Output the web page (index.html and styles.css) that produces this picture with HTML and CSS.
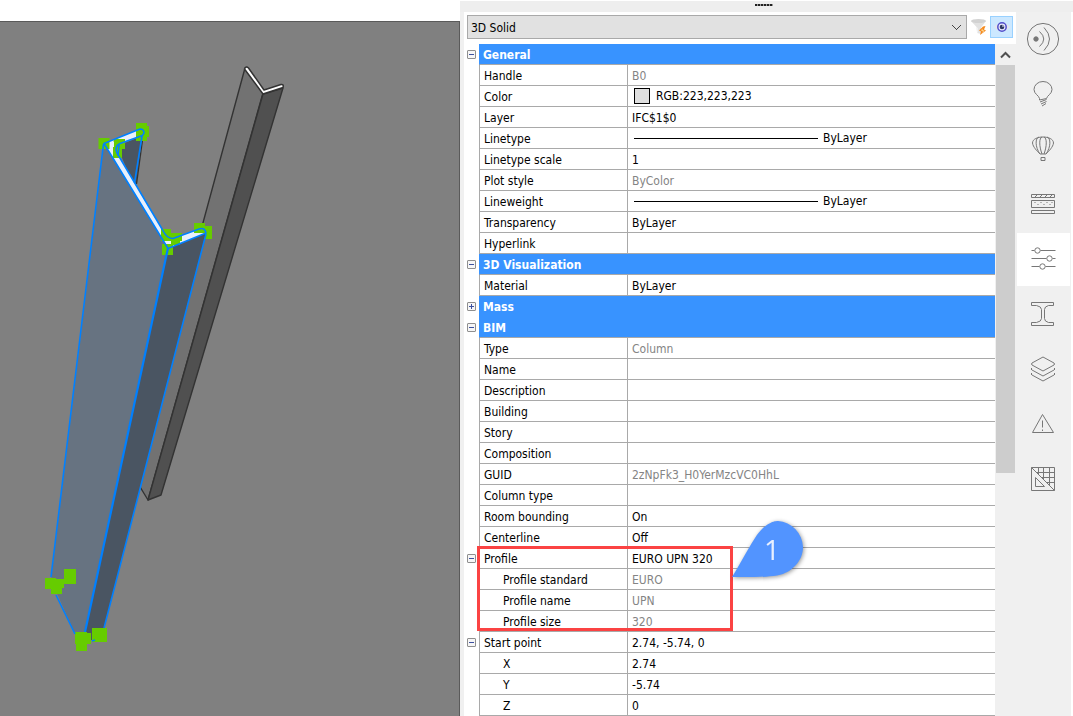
FILE: index.html
```html
<!DOCTYPE html>
<html lang="en">
<head>
<meta charset="utf-8">
<title>Properties - 3D Solid</title>
<link rel="stylesheet" href="styles.css">
</head>
<body>
<div class="app">
  <main class="viewport">
    <svg class="scene" viewBox="0 22 460 694" preserveAspectRatio="xMinYMin meet" role="img" aria-label="Model view with a selected column">
      <g stroke="#333" stroke-width="1.4" stroke-linejoin="round">
        <path d="M245 68L263 93L148 500L134 477Z" fill="#727272"/>
        <path d="M263 94L283 88L161 495L148 500Z" fill="#505050"/>
        <path d="M244.500 69Q246 65.500 248.500 68L264 90L281 84.500Q284 84 283 87.500L263 94Z" fill="#fff" stroke-width="1.500"/>
      </g>
      <path d="M117 146L142 136L136 186L133 184Z" fill="#4a5562"/>
      <path d="M142.500 140L136.500 184" stroke="#333" stroke-width="1.300"/>
      <path d="M104 144L168 248L83 640L75 634L51 580Z" fill="#677381"/>
      <path d="M168 248L206 233L101 640L83 640Z" fill="#4a5562"/>
      <path d="M104 143.500L140 129Q144 129 144 133Q143 135.500 141 136L120 143.500Q114 146 117 153L162 229Q167 239 173 238.500L199 229Q205 227 206 233L168 248.500Z" fill="#e8f0fc"/>
      <g fill="#66cc00">
        <path d="M98.500 138h11v11h-11zM136 123h11v3h2v11h-2v4h-11zM114 139h11v10h-3v9h-9v-12z"/>
        <path d="M161 229h10v4h11v8h-2v4h-9v-4h-10zM162 244h11v11h-11zM194 223h11v3h7v13h-7v-6h-11z"/>
        <path d="M45 578h11v1h8v9h-2v6h-11v-5h-6zM64 569h12v15h-12zM75 632h12v1h4v11h-4v7h-11v-7h-1zM92 628h15v14h-15z"/>
      </g>
      <path d="M110 142h4v5h-4zM164 241h6v2.500h-6z" fill="#e8f0fc"/>
      <g fill="none" stroke="#0080ff" stroke-width="1.600" stroke-linejoin="round">
        <path d="M104 143.500L140 129Q144 129 144 133Q143 135.500 141 136L120 143.500Q114 146 117 153L162 229Q167 239 173 238.500L199 229Q205 227 206 233L168 248.500Z"/>
        <path d="M103.500 144L51 577M56 595L75 634M206 234L104 628M142 136L134.500 183M119 145L118 156M92 641L95 640"/>
        <path d="M168 248L85 632" stroke-width="2.200"/>
      </g>
    </svg>
  </main>

  <aside class="dock">
    <div class="dock-title"><span class="grip"></span></div>
    <div class="dock-body">
      <section class="panel" aria-label="Properties">
        <div class="selector">
          <select class="entity" aria-label="Entity type"><option>3D Solid</option></select>
          <button class="tool" aria-label="Quick select">
            <svg width="18" height="18" viewBox="0 0 18 18">
              <path d="M1 3L7 9.500V15L11 16V9.500L16 3Z" fill="#e2e2e2"/><ellipse cx="8.500" cy="3" rx="7.500" ry="2" fill="#d2d2d2"/><path d="M6 9L8 10V15L7 14.500Z" fill="#f1f1f1"/>
              <path d="M13 8.500L9 12.500L11 13.500L10 17L16 12.500L14 11.500L15.500 8Z" fill="#f58a1f"/><path d="M12.500 10.500L11 12.500L13 13L12 15L14.500 12.800L12.500 12Z" fill="#ffe2a0"/>
            </svg>
          </button>
          <button class="tool tool-on" aria-label="Show selection">
            <svg width="18" height="18" viewBox="0 0 18 18">
              <path d="M1 9Q9 0 17 9Q9 18 1 9Z" fill="#e4e4ee"/><circle cx="9" cy="9" r="4.200" fill="#e9e9ff" stroke="#5050cc" stroke-width="1.500"/><circle cx="9" cy="9" r="2.300" fill="#2d3862"/><circle cx="10" cy="8" r=".8" fill="#fff"/>
            </svg>
          </button>
        </div>

        <div class="sheet">
          <table class="props">
            <colgroup><col class="col-tree"><col class="col-name"><col></colgroup>
            <tbody>
              <tr class="group"><td><button class="toggle" aria-label="Collapse General"></button></td><th colspan="2">General</th></tr>
              <tr><td></td><th>Handle</th><td class="ro">B0</td></tr>
              <tr><td></td><th>Color</th><td class="drawn"><span class="sample"><i class="swatch"></i>RGB:223,223,223</span></td></tr>
              <tr><td></td><th>Layer</th><td>IFC$1$0</td></tr>
              <tr><td></td><th>Linetype</th><td class="drawn"><span class="sample"><i class="stroke"></i>ByLayer</span></td></tr>
              <tr><td></td><th>Linetype scale</th><td>1</td></tr>
              <tr><td></td><th>Plot style</th><td class="ro">ByColor</td></tr>
              <tr><td></td><th>Lineweight</th><td class="drawn"><span class="sample"><i class="stroke"></i>ByLayer</span></td></tr>
              <tr><td></td><th>Transparency</th><td>ByLayer</td></tr>
              <tr><td></td><th>Hyperlink</th><td></td></tr>
            </tbody>
            <tbody>
              <tr class="group"><td><button class="toggle" aria-label="Collapse 3D Visualization"></button></td><th colspan="2">3D Visualization</th></tr>
              <tr><td></td><th>Material</th><td>ByLayer</td></tr>
            </tbody>
            <tbody>
              <tr class="group joined"><td><button class="toggle closed" aria-label="Expand Mass"></button></td><th colspan="2">Mass</th></tr>
            </tbody>
            <tbody>
              <tr class="group"><td><button class="toggle" aria-label="Collapse BIM"></button></td><th colspan="2">BIM</th></tr>
              <tr><td></td><th>Type</th><td class="ro">Column</td></tr>
              <tr><td></td><th>Name</th><td></td></tr>
              <tr><td></td><th>Description</th><td></td></tr>
              <tr><td></td><th>Building</th><td></td></tr>
              <tr><td></td><th>Story</th><td></td></tr>
              <tr><td></td><th>Composition</th><td></td></tr>
              <tr><td></td><th>GUID</th><td class="ro">2zNpFk3_H0YerMzcVC0HhL</td></tr>
              <tr><td></td><th>Column type</th><td></td></tr>
              <tr><td></td><th>Room bounding</th><td>On</td></tr>
              <tr><td></td><th>Centerline</th><td>Off</td></tr>
            </tbody>
            <tbody class="marked">
              <tr><td><button class="toggle" aria-label="Collapse Profile"></button>
                <div class="mark-frame"></div>
                <div class="callout">
                  <svg width="84" height="70" viewBox="0 0 84 70">
                    <path d="M5 61C15 45 20 34 28 22C37 8 46 5 51 5A27 27 0 0 1 76 31C76 46 64 55 56 58C44 62 20 61 5 61Z" fill="#5294ff"/>
                  </svg>
                  <span class="callout-num">1</span>
                </div>
              </td><th>Profile</th><td>EURO UPN 320</td></tr>
              <tr class="sub"><td></td><th>Profile standard</th><td class="ro">EURO</td></tr>
              <tr class="sub"><td></td><th>Profile name</th><td class="ro">UPN</td></tr>
              <tr class="sub"><td></td><th>Profile size</th><td class="ro">320</td></tr>
            </tbody>
            <tbody>
              <tr><td><button class="toggle" aria-label="Collapse Start point"></button></td><th>Start point</th><td>2.74, -5.74, 0</td></tr>
              <tr class="sub"><td></td><th>X</th><td>2.74</td></tr>
              <tr class="sub"><td></td><th>Y</th><td>-5.74</td></tr>
              <tr class="sub"><td></td><th>Z</th><td>0</td></tr>
            </tbody>
          </table>
          <div class="scroll">
            <button class="scroll-up" aria-label="Scroll up"><svg width="11" height="8" viewBox="0 0 11 8"><path d="M1 6.500L5.500 2L10 6.500" fill="none" stroke="#505050" stroke-width="2"/></svg></button>
            <div class="thumb"></div>
          </div>
        </div>
      </section>

      <nav class="rail" aria-label="Panels">
        <button class="rail-btn" aria-label="Tips"><svg viewBox="-17 -17 35 35"><circle r="15.600"/><circle cx="-7" r="2.200" class="solid"/><path d="M-3.500 -7.500Q5 0 -3.500 7.500M1 -11.500Q12 0 1 11.500"/></svg></button>
        <button class="rail-btn" aria-label="Lighting"><svg viewBox="-17 -17 35 35"><path d="M-3.500 6V4.500C-4 1.500 -9 0 -9 -4.500A9 8 0 0 1 9 -4.500C9 0 4 1.500 3.500 4.500L-3.500 6M3.500 5.500L-3 8M3.500 7.500L-2 10M3 9.500L-1 12"/></svg></button>
        <button class="rail-btn" aria-label="Rendering"><svg viewBox="-17 -17 35 35"><path d="M-3 5C-6 2 -10 -2 -10.500 -6C-10.500 -14 10.500 -14 10.500 -6C10 -2 6 2 3 5ZM-3 5C-8 -2 -8 -11 -4 -12M3 5C8 -2 8 -11 4 -12M-1 5C-4 -3 -4 -11 -1 -12M1 5C4 -3 4 -11 1 -12M-2 8.500h4v3h-4z"/></svg></button>
        <button class="rail-btn" aria-label="Compositions"><svg viewBox="-17.500 -17.500 35 35"><path d="M-12 -10H11V-7H-12ZM-12 -4H11V3H-12ZM-12 6H11V9H-12ZM-9 -7l3 -3M-4 -7l3 -3M1 -7l3 -3M6 -7l3 -3"/><path d="M-9 -2h1M-6 0h1M-3 -2h1M0 0h1M3 -2h1M6 0h1M8 -2h1"/></svg></button>
        <button class="rail-btn active" aria-label="Properties"><svg viewBox="-17.500 -17.500 35 35"><path d="M-12 -9h3M-3 -9H12M-12 -1H3M9 -1h3M-12 7h8M2 7h10"/><circle cx="-6" cy="-9" r="2.700"/><circle cx="6" cy="-1" r="2.700"/><circle cx="-1" cy="7" r="2.700"/></svg></button>
        <button class="rail-btn" aria-label="Profiles"><svg viewBox="-17.500 -17.500 35 35"><path d="M-12 -12H10V-9H5Q1 -8 1 -5V4Q1 7 5 8H10V11H-12V8H-7Q-2 7 -2 4V-5Q-2 -8 -7 -9H-12Z"/></svg></button>
        <button class="rail-btn" aria-label="Layers"><svg viewBox="-17 -17 35 35"><path d="M0 -12L11 -6Q12 -5 11 -4L0 2L-11 -4Q-12 -5 -11 -6ZM-11 -1Q-13 0 -11 1L0 7L11 1Q13 0 11 -1M-11 4Q-13 5 -11 6L0 12L11 6Q13 5 11 4"/></svg></button>
        <button class="rail-btn" aria-label="Warnings"><svg viewBox="-17.500 -17.500 35 35"><path d="M-1 -10L10 8H-11ZM-1 -4V3M-1 5V6.500"/></svg></button>
        <button class="rail-btn" aria-label="Drafting"><svg viewBox="-17.500 -17.500 35 35"><path d="M-12 -12V11H11ZM-8 -2V7H1ZM-12 -12H11V11M-5 -12V-5M0 -12V0M6 -12V6M-7 -7H11M-2 -2H11M3 3H11"/></svg></button>
      </nav>
    </div>
  </aside>
</div>
</body>
</html>
```
FILE: styles.css
```css
* { box-sizing: border-box; }

body {
  margin: 0;
  background: #fff;
  color: #000;
  font: 12px/18px "DejaVu Sans Condensed", "DejaVu Sans", sans-serif;
}

button { margin: 0; padding: 0; border: 0; background: none; display: grid; place-items: center; }

.app { display: grid; grid-template-columns: minmax(0, 1fr) 613px; min-height: 100vh; overflow: hidden; }

.viewport { margin-top: 21px; background: #808080; border-top: 1px solid #5a5a5a; border-right: 1px solid #5a5a5a; overflow: hidden; }
.scene { display: block; width: 100%; min-width: 460px; }

.dock { display: flex; flex-direction: column; padding-top: 1px; }
.dock-title { height: 11px; background: #eee; display: flex; justify-content: center; padding: 3px 6px 0 0; }
.grip { width: 18px; height: 2px; background: repeating-linear-gradient(90deg, #222 0 2px, #999 2px 3px); }
.dock-body { flex: 1; display: flex; border-left: 4px solid #f0f0f0; border-right: 2px solid #fff; }

.panel { flex: 1; min-width: 0; }
.selector { display: flex; align-items: center; gap: 2px; height: 32px; padding: 3px 3px 5px; }
.entity {
  appearance: none;
  flex: 1;
  height: 24px;
  padding: 1px 3px 0;
  border: 1px solid #a9a9a9;
  border-radius: 0;
  color: #000;
  font: inherit;
  background-color: #e1e1e1;
  background-image:
    linear-gradient(45deg, #0000 46%, #444 46% 58%, #0000 58%),
    linear-gradient(-45deg, #0000 46%, #444 46% 58%, #0000 58%);
  background-size: 5px 5px;
  background-position: right 9px center, right 5px center;
  background-repeat: no-repeat;
}
.tool { width: 19px; height: 22px; }
.tool-on { width: 23px; background: #cce8ff; border: 1px solid #99d1ff; }

.sheet { display: flex; padding-left: 3px; }
.props { flex: 1; border-collapse: separate; border-spacing: 0; table-layout: fixed; }
.col-tree { width: 12px; }
.col-name { width: 149px; }
.props td, .props th {
  height: 21px;
  padding: 2px 4px 0;
  border-bottom: 1px solid #a9a9a9;
  font-weight: 400;
  text-align: left;
  white-space: nowrap;
}
.props td:first-child { padding: 0; border-bottom: 0; }
.props .drawn { padding: 0 4px; }
.props th { border-left: 1px solid #a9a9a9; border-right: 1px solid #a9a9a9; }
.props .sub th { padding-left: 23px; }
.props .ro { color: #848484; }
.props .group th {
  padding-left: 3px;
  border-left-color: #3893ff;
  border-right: 0;
  background: #3893ff;
  color: #fff;
  font-weight: 700;
}
.props .joined th { border-bottom-color: #3893ff; }

.toggle {
  width: 9px;
  height: 9px;
  border: 1px solid #8f8f8f;
  border-radius: 1px;
  background: linear-gradient(#3c50a0, #3c50a0) center / 5px 1px no-repeat, #f6f6f6;
}
.toggle.closed {
  background:
    linear-gradient(#3c50a0, #3c50a0) center / 5px 1px no-repeat,
    linear-gradient(#3c50a0, #3c50a0) center / 1px 5px no-repeat, #f6f6f6;
}

.sample { display: flex; align-items: center; gap: 5px; padding-left: 2px; }
.swatch { width: 16px; height: 16px; margin-right: 1px; border: 1px solid #000; background: #dfdfdf; }
.stroke { width: 184px; height: 1px; background: #000; }

.marked { position: relative; }
.mark-frame { position: absolute; top: -2px; left: 10px; width: 256px; height: 85px; border: 3px solid #fb4343; pointer-events: none; }
.callout { position: absolute; top: -32px; left: 260px; filter: drop-shadow(1px 1px 2px #0006); }
.callout svg { display: block; }
.callout-num { position: absolute; top: 15px; left: 37px; color: #e8f0ff; font: 400 28px/36px "Open Sans", sans-serif; }

.scroll { width: 21px; padding: 0 1px; background: #f0f0f0; }
.scroll-up { width: 100%; height: 21px; }
.thumb { height: 408px; background: #cdcdcd; }

.rail { width: 55px; padding: 1px 1px 0; background: #f0f0f0; display: flex; flex-direction: column; gap: 2px; }
.rail-btn { width: 53px; height: 53px; }
.rail-btn.active { background: #fff; }
.rail-btn svg { width: 35px; height: 35px; fill: none; stroke: #777; stroke-width: 1; }
.rail-btn .solid { fill: #777; }
```
